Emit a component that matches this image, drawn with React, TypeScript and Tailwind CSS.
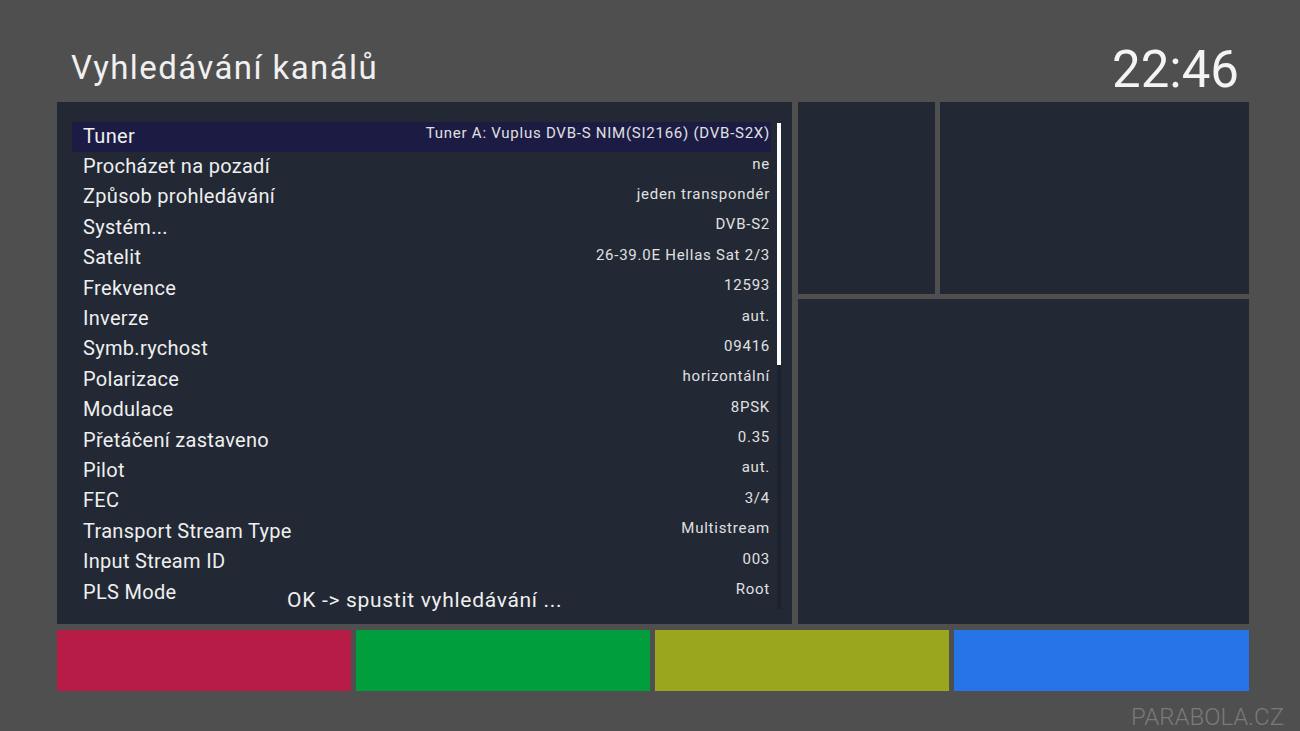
const rows: [string, string][] = [
  ["Tuner", "Tuner A: Vuplus DVB-S NIM(SI2166) (DVB-S2X)"],
  ["Procházet na pozadí", "ne"],
  ["Způsob prohledávání", "jeden transpondér"],
  ["Systém...", "DVB-S2"],
  ["Satelit", "26-39.0E Hellas Sat 2/3"],
  ["Frekvence", "12593"],
  ["Inverze", "aut."],
  ["Symb.rychost", "09416"],
  ["Polarizace", "horizontální"],
  ["Modulace", "8PSK"],
  ["Přetáčení zastaveno", "0.35"],
  ["Pilot", "aut."],
  ["FEC", "3/4"],
  ["Transport Stream Type", "Multistream"],
  ["Input Stream ID", "003"],
  ["PLS Mode", "Root"],
];

export default function App() {
  return (
    <div className="relative flex h-[731px] w-[1300px] flex-col overflow-hidden bg-[#4f4f4f] font-['Roboto',sans-serif] text-[#ececec]">
      {/* header */}
      <header className="flex h-[102px] items-start justify-between pl-[71px] pr-[61px]">
        <h1 className="mt-[46px] text-[33px] leading-[44px] tracking-[1.4px] text-[#f0f0f0]">Vyhledávání kanálů</h1>
        <div className="mt-[39px] text-[51px] leading-[62px] text-[#f4f4f4]">22:46</div>
      </header>

      {/* main area */}
      <div className="ml-[57px] flex h-[522px] gap-[6px]">
        <div className="relative flex w-[735px] gap-[6px] bg-[#222834] pl-[15px] pt-[20px]">
          <div className="flex w-[699px] flex-col">
            {rows.map(([label, value], i) => (
              <div
                key={label}
                className={`flex h-[30.4px] items-center justify-between pl-[11px] pr-[1px] ${
                  i === 0 ? "bg-[#1b1b44]" : ""
                }`}
              >
                <span className="mb-[3px] text-[20px] leading-none tracking-[0.3px] text-[#efefef]">{label}</span>
                <span className="mb-[7px] text-[15px] leading-none tracking-[0.75px] text-[#e0e0e0]">{value}</span>
              </div>
            ))}
          </div>
          <div className="mt-[1px] flex h-[486px] w-[4px] flex-col bg-[#1c2130]">
            <div className="h-[242px] w-full bg-white" />
          </div>
          <div className="absolute left-[230px] top-[488px] text-[21px] leading-none tracking-[0.7px] text-[#efefef]">
            OK -&gt; spustit vyhledávání ...
          </div>
        </div>

        <div className="flex w-[451px] flex-col gap-[5px]">
          <div className="flex h-[192px] gap-[5px]">
            <div className="w-[137px] bg-[#222834]" />
            <div className="flex-1 bg-[#222834]" />
          </div>
          <div className="flex-1 bg-[#222834]" />
        </div>
      </div>

      {/* colour keys */}
      <div className="ml-[57px] mt-[6px] flex h-[61px] w-[1192px] gap-[5px]">
        <div className="w-[294px] bg-[#b71c46]" />
        <div className="w-[294px] bg-[#009e3c]" />
        <div className="w-[294px] bg-[#9ba61f]" />
        <div className="flex-1 bg-[#2674e8]" />
      </div>

      <div className="mr-[16px] mt-[14px] self-end text-[24px] font-light leading-none text-[#7a7a7a]">
        PARABOLA.CZ
      </div>
    </div>
  );
}
